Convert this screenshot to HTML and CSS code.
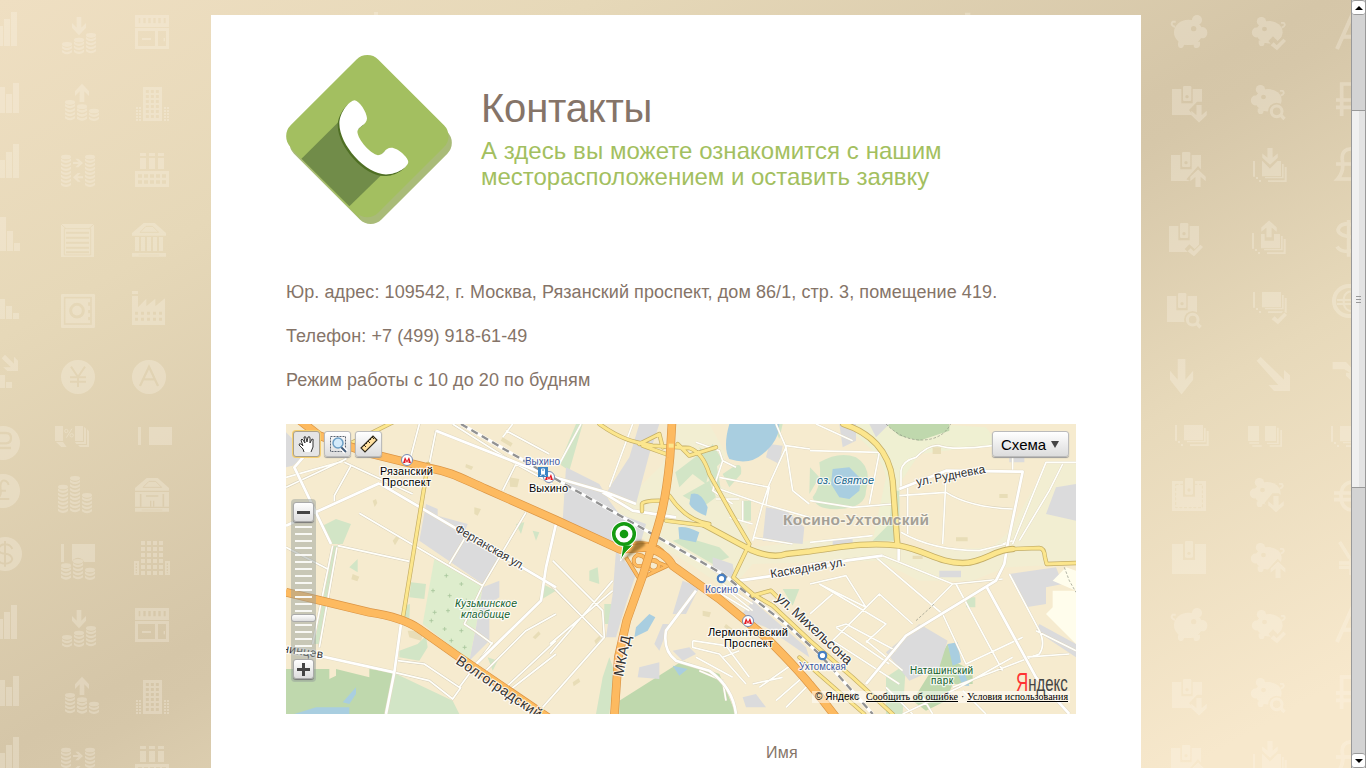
FILE: index.html
```html
<!DOCTYPE html>
<html lang="ru">
<head>
<meta charset="utf-8">
<title>Контакты</title>
<link rel="stylesheet" href="styles.css">
</head>
<body>
<div class="viewport">
<svg class="wallpaper" width="1351" height="768" viewBox="0 0 4053 2304" aria-hidden="true">
<defs>
<path id="rim" d="M0 -1Q15 11 30 -1V6Q15 18 0 6Z"/>
<g id="s1"><ellipse cx="15" cy="7" rx="15" ry="7"/><use href="#rim" y="13"/></g>
<g id="s2"><use href="#s1"/><use href="#rim" y="25"/></g>
<g id="s3"><use href="#s2"/><use href="#rim" y="37"/></g>
<g id="s4"><use href="#s3"/><use href="#rim" y="49"/></g>
<g id="s6"><use href="#s4"/><use href="#rim" y="61"/><use href="#rim" y="73"/></g>
<g id="s7"><use href="#s6"/><use href="#rim" y="85"/></g>
<path id="down" d="M14 0H28V32L42 18V32L21 55L0 32V18L14 32Z"/>
<path id="right" d="M0 10H17L7 0H16L30 13L16 26H7L17 16H0Z"/>
<g id="pig"><ellipse cx="52" cy="52" rx="43" ry="38"/><circle cx="78" cy="15" r="15"/><ellipse cx="95" cy="53" rx="14" ry="17"/><path d="M22 80h65v10q-2 10-12 9q-7 0-7-10H39q-2 10-10 10t-8-12z"/><path d="M12 36Q-4 30 5 20h9" fill="none" stroke="#fff" stroke-width="6"/><circle cx="68" cy="41" r="8" fill="#000"/></g>
<g id="pigl"><use href="#pig" transform="translate(100 0) scale(-.92 .88)"/></g>
<g id="wallet"><path d="M0 9H90V87H0Z"/><path d="M28 0H62V52H28Z" fill="#000"/><rect x="33" width="25" height="45" rx="4"/><circle cx="45" cy="32" r="5" fill="#000"/></g>
<g id="notes"><path d="M0 0h6v47H0zM9 48h6v6H9zM18 57h6v6h-6zM27 0h57v46H27zM87 9h5v43H36v-4h51zM95 18h6v45H45v-5h50z"/></g>
<g id="tick"><path d="M0 22L9 13L18 22L38 2L46 9L19 37Z"/></g>
<g id="lens"><circle cx="20" cy="20" r="16" fill="none" stroke="#fff" stroke-width="9"/><path d="M30 36l7-7 10 10-7 8z"/></g>
<g id="temple"><path d="M0 30L35 0H68L102 30V38H0Z"/><path d="M24 28L42 10H62L80 28Z" fill="none" stroke="#000" stroke-width="3"/><path d="M0 90H102V101H0z"/><path d="M20 96H82" stroke="#000" stroke-width="2"/></g>
<g id="tile" fill="#fff">
<path d="M0 78H9V138H0ZM12 57H30V138H12ZM33 36H51V138H33ZM0 261H15V339H0ZM18 282H36V339H18ZM39 249H57V339H39ZM0 480H15V534H0ZM18 456H36V534H18ZM39 432H57V534H39ZM0 651H18V753H0ZM21 693H39V753H21ZM42 729H60V753H42ZM0 897H15V957H0ZM18 918H36V957H18ZM39 939H57V957H39ZM0 1125H15V1164H0ZM18 1146H36V1164H18ZM5 1075L15 1064L42 1091V1070L54 1082V1113H22L10 1102H33Z"/>
<circle cx="9" cy="1329" r="51"/><path d="M-8 1344V1299H18Q33 1299 33 1314T18 1330H0M0 1344H33" fill="none" stroke="#000" stroke-width="7"/>
<circle cx="9" cy="1473" r="51"/><path d="M26 1455Q21 1440 8 1442Q-2 1448 3 1475Q2 1490-8 1497H28M-5 1472H18" fill="none" stroke="#000" stroke-width="6"/>
<circle cx="15" cy="1662" r="51"/><path d="M37 1647Q31 1633 15 1633T-5 1648Q-3 1661 15 1661T37 1677Q33 1691 15 1691T-5 1678M15 1623V1700" fill="none" stroke="#000" stroke-width="6"/>
<use href="#down" x="216" y="51"/><use href="#s2" x="186" y="126"/><use href="#s3" x="222" y="113"/><use href="#s4" x="258" y="99"/>
<use href="#down" transform="translate(225 306) scale(1 -1)"/><use href="#s4" x="195" y="300"/><use href="#s3" x="231" y="313"/><use href="#s2" x="267" y="326"/>
<use href="#s7" x="183" y="464"/><use href="#s7" x="255" y="464"/><use href="#right" x="219" y="476"/><use href="#right" transform="translate(249 519) scale(-1 1)"/>
<rect x="183" y="672" width="99" height="99"/><path d="M183 672l15 14M282 672l-15 14M193 686H272V765H193Z" fill="none" stroke="#000" stroke-width="3"/><path d="M198 698.500H267M198 713.500H267M198 728.500H267M198 743.500H267M198 757H267" stroke="#000" stroke-width="6"/>
<rect x="183" y="882" width="102" height="102" rx="4"/><rect x="194" y="893" width="79" height="79" fill="none" stroke="#000" stroke-width="5"/><circle cx="231" cy="932" r="19" fill="none" stroke="#000" stroke-width="9"/><path d="M231 918l12 23h-24z"/><path d="M268 907v10M268 930v10M268 951v10" stroke="#000" stroke-width="7"/>
<circle cx="234" cy="1131" r="51"/><path d="M213 1100L234 1131L255 1100M234 1129V1161M210 1132H258M210 1145H258" fill="none" stroke="#000" stroke-width="6"/>
<path d="M165 1278h24v45h-24zM168 1326h21l11 15h-16zM225 1278h24v45h-24zM252 1280l6 6v46h-29l-4-6h27zM261 1288l6 6v47h-27l-6-6h27z"/><g fill="none" stroke="#fff" stroke-width="3"><circle cx="199" cy="1293" r="5"/><circle cx="215" cy="1306" r="5"/><path d="M216 1286l-17 27"/></g>
<use href="#s6" x="174" y="1454"/><use href="#s7" x="210" y="1428"/><use href="#rim" x="210" y="1525"/><use href="#s4" x="246" y="1479"/>
<path d="M183 1632h9v54h-9zM216 1632h69v54h-69z"/><circle cx="234" cy="1692" r="19" fill="#000"/><use href="#s3" x="183" y="1690"/><use href="#s4" x="219" y="1677"/><use href="#s2" x="255" y="1703"/>
<path d="M405 45h102v36H405zM405 84h102v63H405z"/><path d="M416 54h5v16h-5zM430 54h7v16h-7zM445 54h7v16h-7zM460 54h7v16h-7zM475 54h7v16h-7zM491 54h6v16h-6zM414 93h51v45h-51zM474 93h24v45h-24z" fill="#000"/><path d="M426 114h27v6h-27zM491 114h4v10h-4z"/>
<path d="M429 261h57v102h-57z"/><path d="M442 270v85M457 270v85M472 270v85" stroke="#000" stroke-width="9" stroke-dasharray="9 6"/><path d="M411 321v42M420 321v42M495 321v42M504 321v42" stroke="#fff" stroke-width="6" stroke-dasharray="6 3"/>
<path d="M420 459h18v9h-18zM447 459h18v9h-18zM474 459h18v9h-18zM420 474h18v33h-18zM447 474h18v33h-18zM474 474h18v33h-18zM405 513h102v48H405z"/><path d="M414 528h86M414 546h86" stroke="#000" stroke-width="11" stroke-dasharray="12 6"/>
<use href="#temple" x="396" y="669"/><path d="M405 711h12v42h-12zM423 711h12v42h-12zM441 711h12v42h-12zM459 711h12v42h-12zM477 711h12v42h-12z"/>
<path d="M396 873h18v9h-18zM396 888h18v34l25-26v23l27-23v23l29-24v80h-99z"/><path d="M405 940h90M405 958h90" stroke="#000" stroke-width="9" stroke-dasharray="9 9"/>
<circle cx="447" cy="1131" r="51"/><path d="M420 1158L447 1100L474 1158M430 1138H464" fill="none" stroke="#000" stroke-width="7"/>
<path d="M414 1281h9v54h-9zM447 1281h69v54h-69z"/>
<use href="#temple" x="405" y="1434"/><path d="M405 1476h102v44H405z"/><path d="M422 1482v38M490 1482v38" stroke="#000" stroke-width="5"/><path d="M438 1488h37M452 1502v18M461 1502v18" stroke="#000" stroke-width="4"/>
<path d="M429 1623v102M447 1623v102M465 1623v102M483 1623v102" stroke="#fff" stroke-width="12" stroke-dasharray="12 6"/><path d="M402 1683h15v42h-15zM495 1683h15v42h-15z"/><path d="M409 1690v30M502 1690v30" stroke="#000" stroke-width="4" stroke-dasharray="5 4"/>
<g transform="translate(3423 0)">
<use href="#pig" x="90" y="45"/><use href="#pigl" x="333" y="51"/><path d="M382 123l14-14 14 14 18-18 18 18-36 32z" fill="#000"/><use href="#tick" x="389" y="114"/>
<path d="M588 147L638 35L690 147M605 110H670" fill="none" stroke="#fff" stroke-width="12"/>
<use href="#wallet" x="93" y="258"/><path d="M144 330l24-25h16l24 25-34 40z" fill="#000"/><use href="#down" transform="translate(151 315) scale(1.1 .95)"/>
<use href="#pigl" x="330" y="255"/><circle cx="407" cy="334" r="26" fill="#000"/><use href="#lens" x="387" y="314"/>
<path d="M602 348V252H650Q670 275 650 300H585M585 322H650" fill="none" stroke="#fff" stroke-width="11"/>
<use href="#wallet" x="90" y="456"/><path d="M136 538l35-40 35 40-15 10v20h-38v-22z" fill="#000"/><use href="#down" transform="translate(148 561) scale(1.1 -.95)"/>
<use href="#notes" x="336" y="483"/><path d="M352 470l25 5v-35h20v35l25-5-35 36z" fill="#000"/><use href="#down" transform="translate(364 444) scale(1.1 .92)"/>
<path d="M640 447Q600 443 604 480Q610 515 590 537H650M585 492H650" fill="none" stroke="#fff" stroke-width="11"/>
<use href="#wallet" x="84" y="669"/><path d="M131 747l14-14 16 14 20-20 15 15-34 36z" fill="#000"/><use href="#tick" x="140" y="732"/>
<use href="#notes" x="333" y="699"/><path d="M352 702l32-38 35 38-20 0v20h-28v-20z" fill="#000"/><use href="#down" transform="translate(361 712) scale(1.1 -.92)"/>
<path d="M650 680Q600 660 591 689Q592 708 640 712V752Q600 760 588 740M623 660V770" fill="none" stroke="#fff" stroke-width="11"/>
<use href="#wallet" x="78" y="879"/><circle cx="155" cy="959" r="26" fill="#000"/><use href="#lens" x="135" y="939"/>
<use href="#notes" x="336" y="876"/><path d="M384 950l12-12 14 12 18-18 14 14-30 30z" fill="#000"/><use href="#tick" x="392" y="936"/>
<circle cx="624" cy="903" r="45" fill="none" stroke="#fff" stroke-width="12"/><path d="M650 878Q608 865 608 903T650 932M588 900H650M588 912H650" fill="none" stroke="#fff" stroke-width="6"/>
<use href="#down" transform="translate(87 1077) scale(1.65 1.94)"/><path d="M347 1082l12-11 70 68v-29l18 16v47h-48l-16-18h29zM575 1086h40l35 37v38l-35-34v-9l12 0-17-10h-35z"/>
<use href="#notes" x="102" y="1275"/><path d="M321 1278h33v45h-33zM325 1327h29v4h-29zM334 1336h28v4h-28zM372 1278h33v45h-33zM408 1283h5v49h-35v-4h30zM418 1290h5v50h-37v-4h32z"/><use href="#notes" x="570" y="1278"/>
<path d="M93 1443h102v90H93z"/><path d="M104 1453h80v70h-80z" fill="none" stroke="#000" stroke-width="3" stroke-dasharray="9 5"/><path d="M126 1430h36v60h-36z" fill="#000"/><rect x="132" y="1434" width="24" height="50" rx="4"/><circle cx="144" cy="1470" r="5" fill="#000"/>
<use href="#pigl" x="327" y="1434"/><path d="M370 1510l24-30h20l25 30-34 32z" fill="#000"/><use href="#down" transform="translate(382 1488) scale(1.1 .88)"/>
<path d="M650 1447Q600 1440 600 1488T650 1530M579 1479H650M579 1499H650" fill="none" stroke="#fff" stroke-width="11"/>
<path d="M93 1632h102v90H93z"/><path d="M126 1623h36v57h-36z" fill="#000"/><rect x="132" y="1623" width="24" height="50" rx="4"/><circle cx="144" cy="1660" r="5" fill="#000"/>
<use href="#pigl" x="330" y="1629"/><path d="M380 1710l30-34 34 34-20 24h-28z" fill="#000"/><use href="#down" transform="translate(389 1734) scale(1.05 -.9)"/>
<path d="M596 1626l30 48M594 1689h50M594 1702h50M630 1675v50" stroke="#fff" stroke-width="10"/>
</g>
</g>
<mask id="motif" maskUnits="userSpaceOnUse" x="0" y="0" width="4053" height="2304"><use href="#tile"/><use href="#tile" y="1779"/><path d="M1122 36h12v12h-12zM2895 38h16v10h-16z" fill="#fff"/></mask>
</defs>
<rect width="4053" height="2304" fill="#fffaf0" opacity=".27" mask="url(#motif)"/>
</svg>
<main class="page">
<header class="hero">
<svg class="hero-icon" width="166" height="169" viewBox="30 29 498 508">
<rect x="98" y="107" width="372" height="372" rx="46" transform="rotate(45 284 293)" fill="#a9bb78"/>
<rect x="88" y="87" width="372" height="372" rx="46" transform="rotate(45 274 273)" fill="#a3bf60"/>
<path d="M45 310L60 300L240 490L255 525Z" fill="#a3bf60"/>
<path d="M188 230L76 341L220 484L314 392Z" fill="#718c49"/>
<path d="M236 165C250 167 272 200 273 219C273 240 245 243 244 260C246 285 285 328 306 330C325 330 325 308 346 308C365 308 397 337 397 350C397 365 365 388 330 388C270 388 190 300 190 236C190 200 222 165 236 165Z" fill="#4f6f24" transform="translate(-5 5)"/>
<path d="M236 165C250 167 272 200 273 219C273 240 245 243 244 260C246 285 285 328 306 330C325 330 325 308 346 308C365 308 397 337 397 350C397 365 365 388 330 388C270 388 190 300 190 236C190 200 222 165 236 165Z" fill="#fff"/>
</svg>
<div class="hero-text">
<h1 class="title">Контакты</h1>
<p class="subtitle"><span class="subtitle-lead">А здесь вы можете ознакомится с нашим</span><br>месторасположением и оставить заявку</p>
</div>
</header>
<section class="details">
<p>Юр. адрес: 109542, г. Москва, Рязанский проспект, дом 86/1, стр. 3, помещение 419.</p>
<p>Телефон: +7 (499) 918-61-49</p>
<p>Режим работы с 10 до 20 по будням</p>
</section>
<section class="map">
<svg class="map-canvas" width="790" height="290" viewBox="0 0 790 290">
<g transform="scale(.33333)">
<rect width="2370" height="870" fill="#f6ebcf"/>
<path d="M1170 0H1270L1320 90L1290 180L1360 210L1400 370L1570 350L1780 335L1880 380L2120 370L2170 320L2290 110H2370V420L2160 430L2060 470L1900 470L1780 410L1400 420L1330 500L1180 400L1080 350L990 270L1060 190L1130 120Z" fill="#f2eed2"/>
<path d="M1690 0H1940L2100 10L2140 60L1900 90L1840 180V360L1760 350L1800 160Q1790 90 1690 20Z" fill="#eff0d2"/>
<g fill="#d2e5c6">
<path d="M110 305L150 285L195 300L170 360H135ZM143 365H155L100 660H85ZM375 475L420 480L415 525L370 520ZM190 430L215 405V445ZM355 545L372 540L370 585H350ZM395 660L420 635L425 670L400 710L340 700V680ZM820 120L870 0H890L850 140ZM770 480L810 500L760 530ZM345 690L320 745L500 830L520 870H305L320 745ZM605 700L635 710L620 740ZM690 300L715 295L705 330ZM740 320L760 325L750 350ZM1168 145L1240 90L1280 100L1260 180L1220 150L1180 190ZM1190 215L1270 170L1290 220L1250 250ZM1240 70L1290 110L1310 230L1270 170ZM1160 350L1280 420L1330 400L1300 370L1200 340ZM910 440L935 430L940 480L910 470ZM1370 230h25v60h-25zM1820 200L1840 200V350L1760 350L1810 300ZM1490 495h50l-20 50zM2040 520h28v30h-28zM1800 760L1860 720L1850 870H1800ZM970 700L950 760L930 870H970L985 740ZM955 540h25l-10 60h-15zM1572 130L1600 160L1570 210Z"/><path d="M1600 115Q1660 80 1710 100Q1760 130 1740 200Q1740 250 1660 255Q1590 260 1580 220Q1610 180 1600 115Z"/><path d="M1340 130Q1370 110 1365 150L1330 190L1310 150ZM1460 0H1490L1480 45ZM1280 60L1310 110L1290 130L1260 90Z"/></g>
<path d="M445 405L590 485L575 580L550 710L410 600Z" fill="#deedcd"/>
<g fill="#bfd8ad"><path d="M0 735H130V765L150 755V735L250 760V735L325 745L300 870H0ZM1000 830L1190 710L1300 750L1350 870H1000ZM1800 0H1990L1990 20L1900 50L1840 35ZM1880 830L1985 660L2000 710L2060 740V780L2000 780L1980 830L1920 860Z"/></g>
<g fill="#dbdbdc"><path d="M0 25L65 90L20 125L0 130ZM420 240L455 255L455 275L545 300L530 340L640 400L590 480L400 350ZM590 490L640 470V520L610 540V650L550 710L570 610ZM840 130L940 180L970 230L1000 270L1080 300L1060 370L1000 370L830 290ZM1060 0H1120L1090 90L1050 240L965 200L1030 100ZM990 380L1050 450L1020 540L990 640L960 640L980 510ZM1190 470L1240 490L1200 570L1160 570ZM1130 600L1105 660L1120 680L1150 600ZM1060 730L1120 715V765L1055 760ZM1280 400L1340 420L1350 480L1280 440ZM1360 580L1400 530L1560 670L1570 700L1440 610ZM1440 250L1500 260L1555 310L1550 360L1430 350ZM1450 60L1490 65L1480 120L1440 100ZM1660 0H1710V50L1670 70ZM1750 0H1810L1770 40ZM1800 685L1900 600L1985 650L1960 730L1870 770ZM2170 450L2310 430L2330 480L2280 490L2280 540L2220 550ZM2310 190L2370 180V290L2280 270ZM2260 600L2370 660V700L2250 620ZM1160 680L1210 670L1230 690L1190 710ZM1370 820L1410 810L1440 850L1380 850ZM1640 345h60v20h-60zM1960 440h65v20h-65zM2170 90h45v25h-45z"/></g>
<path d="M2340 430L2370 440V500H2300V550L2280 570L2370 660V500L2300 470Z" fill="#fffdec"/>
<g fill="#a9cee0"><path d="M1330 0H1480Q1480 50 1430 90Q1390 125 1330 105Q1310 70 1330 0ZM1215 210Q1245 200 1265 250L1260 275Q1220 260 1210 240ZM1177 310Q1200 305 1240 325L1230 355L1180 345ZM1050 610L1090 570L1108 580L1085 620L1045 640ZM1160 725L1205 735L1180 755ZM1640 135L1690 130L1725 165L1720 200L1690 225L1660 220L1635 180ZM1985 660L2015 655L2025 715L2000 725ZM2015 750L2035 745L2050 785L2030 785ZM170 835L210 790V810L190 840ZM25 870L90 850H190V870Z"/></g>
<path d="M475 455h12m-6-6v12M520 480h12m-6-6v12M435 500h12m-6-6v12M485 515h12m-6-6v12M535 530h12m-6-6v12M440 565h12m-6-6v12M470 615h12m-6-6v12M520 620h12m-6-6v12M490 650h12m-6-6v12M530 670h12m-6-6v12M430 590h12m-6-6v12M480 560h12m-6-6v12M525 575h12m-6-6v12" stroke="#a7c59b" stroke-width="2.500"/>
<path fill="#e8ddb7" d="M260 230l10-5 4 12-8 12zM320 350l12-15 10 4-15 25zM565 250l20 5-10 20-10-5zM540 120l22 8-6 10-18-8zM200 450l20 8-6 14-18-6zM650 40l30 18-6 10-30-18zM670 160l30 5-6 25-22-2zM740 640l18-18 6 8-16 16zM365 620h50l-10 30-35-10zM1250 560l25 5-5 15-20-5zM925 650l15-15 5 8-15 18zM860 775l18-12 5 10-20 14zM1320 600l20 15-8 8-18-14zM1940 70h25v20h-25zM2140 210h25v12h-25zM2010 340h35v12h-35zM1880 395h30v10h-30z"/>
<g fill="none" stroke-linejoin="round">
<g stroke="#ddd5bf" stroke-width="8">
<path d="M0 190L180 105L170 90M175 115L380 210M195 125L145 215V232M220 268L590 485L535 600L565 620L620 660M0 370L125 435M140 365L80 660M153 370L100 670M155 365L370 412M400 0L375 95M450 20L430 120M720 265L640 400L590 485M535 345L490 420M690 120L650 200M500 0L690 120L800 180M660 20L790 90M335 710L415 720L520 790L620 655M325 745L430 770L500 825L525 790M665 785L810 650M675 795L810 690M600 740L720 620L810 570M800 410L950 560L955 640L770 850M792 480L950 640M792 690L980 470M792 660L980 500"/>
</g>
<path d="M0 190L180 105L170 90M175 115L380 210M195 125L145 215V232M220 268L590 485L535 600L565 620L620 660M0 370L125 435M140 365L80 660M153 370L100 670M155 365L370 412M400 0L375 95M450 20L430 120M720 265L640 400L590 485M535 345L490 420M690 120L650 200M500 0L690 120L800 180M660 20L790 90M335 710L415 720L520 790L620 655M325 745L430 770L500 825L525 790M665 785L810 650M675 795L810 690M600 740L720 620L810 570M800 410L950 560L955 640L770 850M792 480L950 640M792 690L980 470M792 660L980 500M0 160L170 112M885 0L820 120M1040 0L970 190M650 40L680 0M1230 55L1300 80L1310 110L1280 200L1340 240M1310 110L1350 130M1300 160L1450 190L1440 240M1285 190L1430 240L1400 350M1290 225H1360M1470 0L1500 70L1450 180L1430 240M1500 70L1520 200L1570 240M1500 65L1572 75M1430 240L1570 280M1400 340L1520 360M1370 230V290M1330 280L1400 300M1290 500L1390 560M1310 480L1400 540M1325 500L1400 560M1340 480L1410 530M1220 650V670L1300 690L1380 780M1220 650L1320 665L1390 760M1230 700L1340 760M1240 740L1310 770L1320 830M1310 700L1360 680M1420 790L1520 720M1500 850L1580 770M1470 830L1550 760M1400 780L1490 760M1572 230L1700 250L1820 240M1590 0L1700 50M1572 80L1780 85L1750 240M1845 190V140Q1850 110 1890 100Q1930 60 1960 65Q2000 80 2120 65M1840 215L1980 205Q2050 250 2180 255M1865 190V330M1980 160L1970 360M1572 355L1760 335M1845 325Q1940 380 2080 380L2160 360M1770 400L1970 570L2040 720L2210 640M1840 415L2000 480L2150 465M1572 480L1680 455L1740 550M1600 480L1740 550L1780 510L1880 600M1740 550L1640 650M1640 510L1572 570M1600 480L1800 600L1740 655M1650 610L1680 600L1830 680M1650 610L1810 720M2010 480L2150 740M1940 540L2000 480M1840 780L1640 650M2000 790L2260 690Q2280 660 2260 620L2170 450M1850 870L2020 790L2180 700M2210 700L2350 690M2250 620L2370 680M2370 115H2280L2180 360M2330 120L2290 200L2200 350M2180 350L2150 360M1572 420L1790 395L1840 415M1850 740L1740 650M1910 820L1940 870M1880 870L1800 790M2030 800L2100 870M2180 90V140" stroke="#ddd5bf" stroke-width="7"/>
<path d="M0 190L180 105L170 90M175 115L380 210M195 125L145 215V232M220 268L590 485L535 600L565 620L620 660M0 370L125 435M140 365L80 660M153 370L100 670M155 365L370 412M400 0L375 95M450 20L430 120M720 265L640 400L590 485M535 345L490 420M690 120L650 200M500 0L690 120L800 180M660 20L790 90M335 710L415 720L520 790L620 655M325 745L430 770L500 825L525 790M665 785L810 650M675 795L810 690M600 740L720 620L810 570M800 410L950 560L955 640L770 850M792 480L950 640M792 690L980 470M792 660L980 500M0 160L170 112M885 0L820 120M1040 0L970 190M650 40L680 0M1230 55L1300 80L1310 110L1280 200L1340 240M1310 110L1350 130M1300 160L1450 190L1440 240M1285 190L1430 240L1400 350M1290 225H1360M1470 0L1500 70L1450 180L1430 240M1500 70L1520 200L1570 240M1500 65L1572 75M1430 240L1570 280M1400 340L1520 360M1370 230V290M1330 280L1400 300M1290 500L1390 560M1310 480L1400 540M1325 500L1400 560M1340 480L1410 530M1220 650V670L1300 690L1380 780M1220 650L1320 665L1390 760M1230 700L1340 760M1240 740L1310 770L1320 830M1310 700L1360 680M1420 790L1520 720M1500 850L1580 770M1470 830L1550 760M1400 780L1490 760M1572 230L1700 250L1820 240M1590 0L1700 50M1572 80L1780 85L1750 240M1845 190V140Q1850 110 1890 100Q1930 60 1960 65Q2000 80 2120 65M1840 215L1980 205Q2050 250 2180 255M1865 190V330M1980 160L1970 360M1572 355L1760 335M1845 325Q1940 380 2080 380L2160 360M1770 400L1970 570L2040 720L2210 640M1840 415L2000 480L2150 465M1572 480L1680 455L1740 550M1600 480L1740 550L1780 510L1880 600M1740 550L1640 650M1640 510L1572 570M1600 480L1800 600L1740 655M1650 610L1680 600L1830 680M1650 610L1810 720M2010 480L2150 740M1940 540L2000 480M1840 780L1640 650M2000 790L2260 690Q2280 660 2260 620L2170 450M1850 870L2020 790L2180 700M2210 700L2350 690M2250 620L2370 680M2370 115H2280L2180 360M2330 120L2290 200L2200 350M2180 350L2150 360M1572 420L1790 395L1840 415M1850 740L1740 650M1910 820L1940 870M1880 870L1800 790M2030 800L2100 870M2180 90V140" stroke="#fffffb" stroke-width="5"/>
<path d="M0 305L280 178M60 90L25 130L135 360M280 178L810 490M75 690L325 745L345 600M325 745L300 870M810 300L780 430L765 530L560 730M450 20L790 155L960 205L1050 240M1230 500L1140 620Q1130 680 1170 710L1270 740Q1340 790 1350 870M1360 470L1572 440L1680 410L1790 395M1840 195L1980 140L2210 143L2165 360L2155 420L2130 470L1860 635L1740 780M2100 485L2250 760L2350 870M1838 350V410M950 205L1040 260L1170 280" stroke="#e2dac4" stroke-width="11"/>
<path d="M0 305L280 178M60 90L25 130L135 360M280 178L810 490M75 690L325 745L345 600M325 745L300 870M810 300L780 430L765 530L560 730M450 20L790 155L960 205L1050 240M1230 500L1140 620Q1130 680 1170 710L1270 740Q1340 790 1350 870M1360 470L1572 440L1680 410L1790 395M1840 195L1980 140L2210 143L2165 360L2155 420L2130 470L1860 635L1740 780M2100 485L2250 760L2350 870M1838 350V410M950 205L1040 260L1170 280" stroke="#fff" stroke-width="8"/>
<path d="M525 0L800 160L1310 450L1410 530L1500 600L1600 690L1760 870" stroke="#fff" stroke-width="10"/><path d="M525 0L800 160L1310 450L1410 530L1500 600L1600 690L1760 870" stroke="#929292" stroke-width="7" stroke-dasharray="22 14"/>
<g stroke-linecap="round">
<path d="M1250 300L1395 378Q1460 405 1500 390L1572 382C1690 365 1750 355 1840 365C1920 380 1960 417 2030 417C2090 417 2130 375 2180 375M1672 0C1750 25 1810 80 1820 170L1834 360" stroke="#c4ae66" stroke-width="19"/>
<path d="M190 60L320 -5M426 120L350 585M940 0C1010 50 1050 55 1100 65L1210 72Q1250 85 1270 150L1340 275L1390 360L1342 460L1400 510L1460 545L1572 650L1700 760L1820 870M1400 515L1455 500L1475 520M1068 262V240Q1070 230 1120 230M1140 290L1260 305L1395 378M2180 375L2260 372Q2275 372 2277 400L2282 420L2370 417M1150 215Q1200 290 1270 300M1060 60L1120 30L1130 70M1070 65L1140 90M1175 60L1210 95L1290 70" stroke="#c4ae66" stroke-width="13"/>
<path d="M190 60L320 -5M426 120L350 585M940 0C1010 50 1050 55 1100 65L1210 72Q1250 85 1270 150L1340 275L1390 360L1342 460L1400 510L1460 545L1572 650L1700 760L1820 870M1400 515L1455 500L1475 520M1068 262V240Q1070 230 1120 230M1140 290L1260 305L1395 378M2180 375L2260 372Q2275 372 2277 400L2282 420L2370 417M1150 215Q1200 290 1270 300M1060 60L1120 30L1130 70M1070 65L1140 90M1175 60L1210 95L1290 70" stroke="#fce68d" stroke-width="9"/>
<path d="M1250 300L1395 378Q1460 405 1500 390L1572 382C1690 365 1750 355 1840 365C1920 380 1960 417 2030 417C2090 417 2130 375 2180 375M1672 0C1750 25 1810 80 1820 170L1834 360" stroke="#fce68d" stroke-width="14"/>
<path d="M1735 870L1632 780L1540 700" stroke="#c4ae66" stroke-width="12"/><path d="M1735 870L1632 780L1540 700" stroke="#fce68d" stroke-width="8"/>
</g>
<g stroke="#d99340" stroke-width="12"><path d="M1020 400L1060 465L1145 425M1030 360Q1140 345 1150 430M1050 390L1140 425"/><circle cx="1060" cy="410" r="17"/><circle cx="1103" cy="424" r="16"/></g>
<g stroke="#fdbb61" stroke-width="8"><path d="M1020 400L1060 465L1145 425M1030 360Q1140 345 1150 430M1050 390L1140 425"/><circle cx="1060" cy="410" r="17"/><circle cx="1103" cy="424" r="16"/></g>
<g stroke="#db9545" stroke-width="26"><path d="M30 -20L100 35L250 88L430 132C500 145 530 165 600 195L810 288L1002 376L1080 370Q1140 385 1160 425L1300 525L1440 640C1500 700 1560 760 1650 880M0 505L250 565Q350 580 400 615L520 700L800 890M1158 -5L1152 100Q1140 230 1115 310L1072 450L1022 590L997 700L985 875"/></g>
<g stroke="#fdba60" stroke-width="22"><path d="M30 -20L100 35L250 88L430 132C500 145 530 165 600 195L810 288L1002 376L1080 370Q1140 385 1160 425L1300 525L1440 640C1500 700 1560 760 1650 880M0 505L250 565Q350 580 400 615L520 700L800 890M1158 -5L1152 100Q1140 230 1115 310L1072 450L1022 590L997 700L985 875"/></g>
<path d="M1148 65h15" stroke="#fce68d" stroke-width="12"/>
<path d="M1800 0Q1850 50 1910 48T1994 0M1890 590L1945 540M2335 430L2350 470L2370 505" stroke="#8b9080" stroke-width="2" stroke-dasharray="8 5"/>
</g>
</g>
<g class="halo place"><text x="94" y="51" textLength="53">Рязанский</text><text x="96" y="62" textLength="49">Проспект</text><text x="243" y="68" textLength="39">Выхино</text><text x="422" y="212" textLength="80">Лермонтовский</text><text x="438" y="223" textLength="49">Проспект</text></g>
<g class="halo rail-name"><text x="239" y="41" textLength="35">Выхино</text><text x="419" y="169" textLength="33">Косино</text><text x="513" y="246" textLength="47">Ухтомская</text></g>
<g class="halo green"><text x="169" y="183" textLength="62">Кузьминское</text><text x="175" y="194" textLength="49">кладбище</text></g>
<g class="halo green upright"><text x="624" y="250" textLength="63">Наташинский</text><text x="645" y="260" textLength="22">парк</text></g>
<text class="halo water" x="531" y="60" textLength="57">оз. Святое</text>
<text class="district" x="497" y="101" textLength="146">Косино-Ухтомский</text>
<g class="halo street"><text transform="translate(168 107) rotate(30)" textLength="79">Ферганская ул.</text><text transform="translate(485 154) rotate(-9.500)" textLength="76">Каскадная ул.</text><text transform="translate(631 62) rotate(-11)" textLength="70">ул. Рудневка</text><text transform="translate(-4 228) rotate(9)" textLength="41">нинцев</text></g>
<g class="halo street big"><text transform="translate(169 239) rotate(34)" textLength="100">Волгоградский</text><text transform="translate(489 175) rotate(42.500)" textLength="98">ул. Михельсона</text><text transform="translate(337 253) rotate(-79)" textLength="41">МКАД</text></g>
<defs><g id="metro"><circle r="5.500" fill="#fff" stroke="#7589b2"/><path d="M-4 3L-2-3L0 1L2-3L4 3H1.500V0L0 3L-1.500 0V3Z" fill="#e21822"/></g></defs>
<use href="#metro" x="121" y="36"/><use href="#metro" x="263" y="53"/><use href="#metro" x="462" y="197"/>
<rect x="252" y="43" width="10" height="10" fill="#3984c5"/><rect x="255" y="44.500" width="4" height="6" rx="1" fill="#fff"/><path d="M256 46h2" stroke="#3984c5"/><path d="M254.500 52l1-1.500m4 1.500l-1-1.500" stroke="#fff"/>
<g fill="#fff" stroke="#467fc3" stroke-width="2.200"><circle cx="435.500" cy="154.500" r="3.700"/><circle cx="536.500" cy="231.500" r="3.700"/></g>
<path class="pin-shadow" d="M336 137Q347 125 350 117Q359 115 359 121Q350 128 336 137Z"/>
<circle cx="338" cy="110" r="13" fill="#fff"/><path d="M334.500 137L337 121H347Q338 128 334.500 137Z" fill="#159c12" stroke="#fff"/><circle cx="338" cy="110" r="10.300" fill="#fff" stroke="#159b12" stroke-width="3.500"/><circle cx="338" cy="110" r="4.300" fill="#149b12"/>
<rect x="526" y="267" width="258" height="12" fill="#fff" opacity=".5"/>
<text class="copy" x="529" y="276" textLength="44">© Яндекс</text>
<text class="logo" transform="translate(730 267) scale(.68 1)"><tspan class="logo-red">Я</tspan><tspan class="logo-rest">ндекс</tspan></text>
<g class="legal"><text x="580" y="276" textLength="92">Сообщить об ошибке</text><text x="675" y="276">·</text><text x="681" y="276" textLength="101">Условия использования</text><path d="M580 277.500h92M681 277.500h101" stroke="#000"/></g>
</svg>
<div class="tools">
<button class="tool active"><svg width="18" height="18" viewBox="0 0 18 18"><path d="M6 17L5 14L1 10Q1 8 3 9L5 11L3 5Q4 3 5 5L7 8L6 2Q8 1 8 3L9 7L10 2Q12 1 12 3V8L14 4Q16 4 15 6V12L13 17" fill="#fff" stroke="#333"/></svg></button>
<button class="tool"><svg width="20" height="20" viewBox="0 0 20 20"><rect x="2.500" y="2.500" width="15" height="15" fill="none" stroke="#5c6471" stroke-dasharray="2 1"/><path d="M13 13L18 18" stroke="#fff" stroke-width="5"/><path d="M13 13L18 18" stroke="#445c78" stroke-width="2"/><circle cx="10" cy="9" r="5" fill="#d3eafa" stroke="#6c9ec4" stroke-width="1.500"/></svg></button>
<button class="tool"><svg width="20" height="20" viewBox="0 0 20 20"><path d="M2 14L14 2L18 6L6 18Z" fill="#ffe0a0" stroke="#2e2819" stroke-width="1.100"/><path d="M5 11l2 2m0-4l1 1m1-3l2 2m0-4l1 1m1-3l2 2" stroke="#2e2819"/></svg></button>
</div>
<div class="layer-pick">Схема <span class="caret"></span></div>
<div class="zoom-control">
<button class="zoom-button minus"></button>
<div class="zoom-track"><span class="zoom-thumb"></span></div>
<button class="zoom-button plus"></button>
</div>
</section>
<div class="form-label">Имя</div>
</main>
</div>
<div class="scrollbar"><div class="arrow-box"><i class="arrow up"></i></div><div class="trough first"></div><div class="thumb"><i class="grip"></i></div><div class="trough last"></div><div class="arrow-box"><i class="arrow down"></i></div></div>
</body>
</html>
```
FILE: styles.css
```css
* { box-sizing: border-box; }
body { margin: 0; display: flex; height: 768px; overflow: hidden; font-family: "Liberation Sans", Arial, sans-serif; color: #857468; }
.viewport { position: relative; width: 1351px; height: 768px; overflow: hidden; background: linear-gradient(to bottom right, #efdfc2 0%, #e6d8b8 22%, #d5c6a8 49%, #d6c7a9 52%, #e7d9ba 70%, #f7e8cc 94%); }
.wallpaper { position: absolute; left: 0; top: 0; }
.page { position: relative; width: 930px; height: 753px; margin: 15px 0 0 211px; padding: 40px 65px 0 75px; background: #fff; overflow: hidden; }
.hero { display: flex; gap: 29px; height: 169px; }
.hero-icon { flex: none; }
.hero-text { padding-top: 30px; }
.title { margin: 0; font-size: 40px; line-height: 46px; font-weight: 400; letter-spacing: -.2px; }
.subtitle { margin: 7px 0 0; font-size: 24px; line-height: 26px; color: #a3bf60; white-space: nowrap; letter-spacing: -.02px; }
.subtitle-lead { letter-spacing: .05px; }
.details { margin-top: 57px; height: 143px; font-size: 18px; line-height: 22px; white-space: nowrap; letter-spacing: .078px; }
.details p { margin: 0 0 22px; }
.map { position: relative; width: 790px; height: 290px; overflow: hidden; }
.map-canvas { display: block; }
.map text { fill: #222; }
.map .halo text, .map text.halo { paint-order: stroke; stroke: #fff; stroke-opacity: .75; stroke-width: 2.5px; stroke-linejoin: round; }
.map .place text { font-size: 11px; fill: #000; }
.map .rail-name text { font-size: 10px; fill: #3b56a0; }
.map .green text { font-size: 10.5px; font-style: italic; fill: #12602c; }
.map .green.upright text { font-style: normal; font-size: 10px; }
.map .water { font-size: 11px; font-style: italic; fill: #16648c; }
.map .district { font-size: 15.5px; font-weight: 700; fill: #a4a096; stroke: #fff; stroke-opacity: .5; stroke-width: 2px; paint-order: stroke; }
.map .street text { font-size: 12px; fill: #333; }
.map .street.big text { font-size: 14px; }
.map .copy { font-size: 10px; fill: #000; }
.map .logo { font-size: 22px; }
.map .logo-red { fill: #f33; font-size: 25px; }
.map .logo-rest { fill: #444; }
.map .legal text { font-family: "Liberation Serif", serif; font-size: 10px; fill: #000; }
.pin-shadow { fill: #5c4310; opacity: .55; filter: blur(1px); }
.tools { position: absolute; left: 7px; top: 7px; display: flex; gap: 4px; }
.tool { display: grid; place-items: center; width: 27px; height: 26px; padding: 0; border: 1px solid #bbb; border-radius: 3px; background: linear-gradient(#fff, #dcdcdc); box-shadow: 0 1px 1px #999; }
.tool.active { border: 1px solid #aaa18b; background: #e5e5e5; box-shadow: 0 0 0 1px #f6cf70; }
.layer-pick { position: absolute; left: 706px; top: 7px; display: flex; align-items: center; gap: 5px; width: 77px; height: 26px; padding-left: 8px; border: 1px solid #bbb; border-radius: 3px; background: linear-gradient(#fff, #dcdcdc); box-shadow: 0 1px 1px #999; color: #000; font-size: 15px; }
.caret { border: 4px solid transparent; border-top: 7px solid #444; border-bottom: 0; }
.zoom-control { position: absolute; left: 5px; top: 75px; width: 25px; height: 183px; padding: 3px 2px; display: flex; flex-direction: column; border-radius: 4px; background: rgba(150,158,155,.48); }
.zoom-button { position: relative; flex: none; width: 21px; height: 20px; padding: 0; border: 1px solid #aaa; border-radius: 3px; background: linear-gradient(#fff, #ddd); box-shadow: 0 1px 1px #777; }
.zoom-button::before, .plus::after { content: ""; position: absolute; left: 3px; top: 8px; width: 13px; height: 3px; background: #444; }
.plus::after { transform: rotate(90deg); }
.zoom-track { position: relative; flex: 1; margin: 4px 2px 0; background: repeating-linear-gradient(#f8f8f4 0 2px, transparent 2px 7px); }
.zoom-thumb { position: absolute; left: -4px; top: 88px; width: 25px; height: 8px; border: 1px solid #aaa; border-radius: 3px; background: linear-gradient(#fff, #ddd); }
.form-label { margin: 29px 0 0 480px; font-size: 16px; line-height: 20px; letter-spacing: .3px; }
.scrollbar { width: 15px; height: 768px; display: flex; flex-direction: column; border-left: 1px solid #999; border-right: 1px solid #999; background: #d3d3d3; }
.arrow-box { flex: none; display: grid; place-items: center; height: 15px; background: #fff; border: 1px solid #999; border-width: 1px 0; border-radius: 3px; }
.arrow { border: 4px solid transparent; }
.up { border-top: 0; border-bottom-color: #000; }
.down { border-bottom: 0; border-top-color: #000; }
.first { height: 95px; }
.thumb { height: 378px; display: grid; place-items: center; border: 1px solid #999; border-width: 1px 0; background: linear-gradient(to right, #f0f0f0 7px, #e3e3e3 7px); }
.grip { width: 5px; height: 7px; background: repeating-linear-gradient(#999 0 1px, transparent 1px 3px); }
.last { height: 265px; }
```
